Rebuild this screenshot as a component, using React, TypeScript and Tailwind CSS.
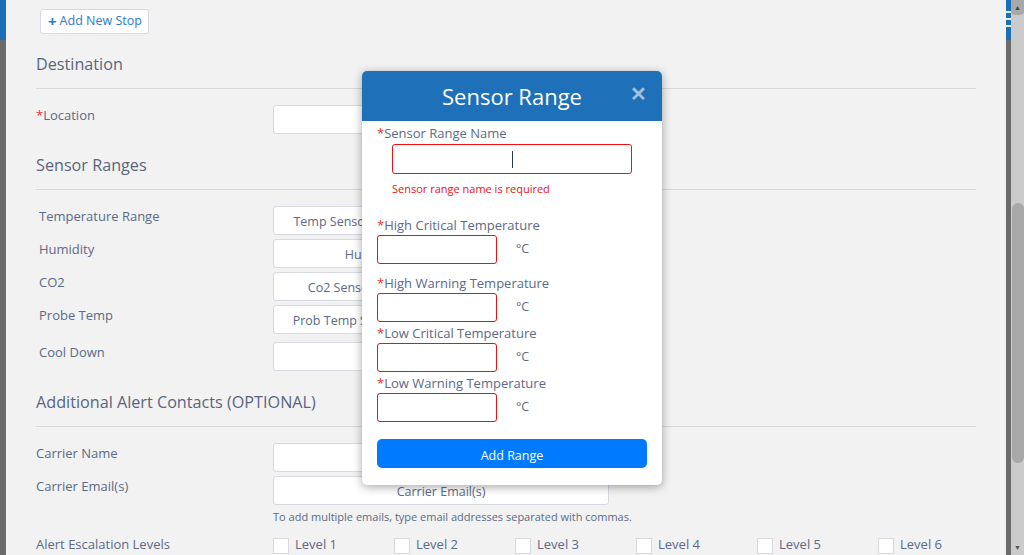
import React from 'react';

const font = { fontFamily: '"Open Sans", "Noto Sans", sans-serif' };

function Label({ text, required, indent }: { text: string; required?: boolean; indent?: boolean }) {
  return (
    <div className={`w-[237px] shrink-0 text-[13px] leading-[20px] text-[#5b6a87] ${indent ? 'pl-[3px]' : ''}`}>
      {required ? <span className="text-[#f0312b]">*</span> : null}
      {text}
    </div>
  );
}

function FieldRow({ label, value, required, indent, className }: { label: string; value?: string; required?: boolean; indent?: boolean; className?: string }) {
  return (
    <div className={`flex ${className ?? ''}`}>
      <Label text={label} required={required} indent={indent} />
      <div className="flex h-[29px] w-[336px] items-center justify-center overflow-hidden whitespace-nowrap rounded-[3px] border border-[#d6d9e0] bg-white pt-[3px] text-[12.5px] text-[#5b6a87]">
        {value}
      </div>
    </div>
  );
}

function Section({ title, className }: { title: string; className?: string }) {
  return (
    <div className={`border-b border-[#d9d9d9] pb-[12px] text-[16.2px] leading-[24px] text-[#5a6580] ${className ?? ''}`}>{title}</div>
  );
}

function TempField({ label, className }: { label: string; className?: string }) {
  return (
    <div className={className}>
      <div className="text-[13px] leading-[18px] text-[#5b6a87]">
        <span className="text-[#f0312b]">*</span>
        {label}
      </div>
      <div className="mt-[1px] flex items-center">
        <div className="h-[29px] w-[120px] rounded-[3px] border border-[#f01010] bg-white" />
        <span className="ml-[19px] text-[12.5px] text-[#5b6a87]">°C</span>
      </div>
    </div>
  );
}

function SensorModal() {
  return (
    <div className="absolute left-[356px] top-[71px] w-[300px] overflow-hidden rounded-[5px] bg-white shadow-[0_2px_10px_rgba(0,0,0,0.35)]">
      <div className="relative flex h-[50px] items-center justify-center bg-[#1e70b8]">
        <span className="text-[22px] text-white">Sensor Range</span>
        <span className="absolute right-[15px] top-[13px] text-[20px] font-bold leading-[20px] text-[#a6bfdc]">✕</span>
      </div>
      <div className="px-[15px] pb-[17px] pt-[3px]">
        <div className="text-[13px] leading-[18px] text-[#5b6a87]">
          <span className="text-[#f0312b]">*</span>Sensor Range Name
        </div>
        <div className="ml-[15px] mt-[2px] flex h-[30px] w-[240px] items-center justify-center rounded-[3px] border border-[#f01010] bg-white">
          <div className="h-[17px] w-px bg-[#2a3a5a]" />
        </div>
        <div className="ml-[15px] mt-[7px] text-[11px] leading-[15px] text-[#f01010]">Sensor range name is required</div>
        <TempField label="High Critical Temperature" className="mt-[20px]" />
        <TempField label="High Warning Temperature" className="mt-[10px]" />
        <TempField label="Low Critical Temperature" className="mt-[2px]" />
        <TempField label="Low Warning Temperature" className="mt-[2px]" />
        <button type="button" className="mt-[17px] h-[29px] w-[270px] rounded-[5px] bg-[#007bff] pt-[6px] text-[12.5px] text-white">
          Add Range
        </button>
      </div>
    </div>
  );
}

export default function App() {
  const levels = ['Level 1', 'Level 2', 'Level 3', 'Level 4', 'Level 5', 'Level 6'];
  return (
    <div className="flex h-[555px] w-[1024px] overflow-hidden bg-[#6b6b6b]" style={font}>
      <div className="flex w-[6px] shrink-0 flex-col">
        <div className="h-[40px] bg-[#1a6fb8]" />
      </div>

      <div className="relative w-[1000px] shrink-0 bg-[#f2f2f2] px-[30px] pt-[9px]">
        <button type="button" className="ml-[4px] flex h-[25px] items-center gap-[3px] rounded-[3px] border border-[#d6d9e0] bg-white pl-[7px] pr-[6px] text-[12.5px] text-[#2b7ad0]">
          <span className="text-[15px] font-bold leading-[15px]">+</span>
          Add New Stop
        </button>

        <Section title="Destination" className="mt-[18px]" />
        <FieldRow label="Location" required className="mt-[16px]" />

        <Section title="Sensor Ranges" className="mt-[19px]" />
        <div className="mt-[16px] flex flex-col gap-[4px]">
          <FieldRow label="Temperature Range" indent value="Temp Sensor Range: Frozen Goods (-25°C to -15°C)" />
          <FieldRow label="Humidity" indent value="Humidity Sensor Range 20%-60%" />
          <FieldRow label="CO2" indent value="Co2 Sensor Range: Standard (400 - 1000 ppm)" />
          <FieldRow label="Probe Temp" indent value="Prob Temp Sensor Range: Chilled Goods 2°C to 8°C" />
          <FieldRow label="Cool Down" indent className="mt-[4px]" />
        </div>

        <Section title="Additional Alert Contacts (OPTIONAL)" className="mt-[19px]" />
        <div className="mt-[16px] flex flex-col gap-[4px]">
          <FieldRow label="Carrier Name" />
          <FieldRow label="Carrier Email(s)" value="Carrier Email(s)" />
        </div>
        <div className="ml-[237px] mt-[4px] text-[11px] leading-[16px] text-[#5b6a87]">
          To add multiple emails, type email addresses separated with commas.
        </div>
        <div className="mt-[9px] flex">
          <Label text="Alert Escalation Levels" />
          <div className="flex">
            {levels.map((lv) => (
              <div key={lv} className="flex w-[121px] items-start gap-[6px]">
                <div className="mt-[4px] h-[16px] w-[16px] border border-[#d6d9e0] bg-white" />
                <span className="text-[13px] leading-[20px] text-[#5b6a87]">{lv}</span>
              </div>
            ))}
          </div>
        </div>

        <SensorModal />
      </div>

      <div className="flex w-[5px] shrink-0 flex-col">
        <div className="flex h-[40px] flex-col gap-[5px] bg-[#1a6fb8] pt-[11px]">
          <div className="h-[2px] bg-[#e8eef6]" />
          <div className="h-[2px] bg-[#e8eef6]" />
          <div className="h-[2px] bg-[#e8eef6]" />
        </div>
      </div>

      <div className="relative flex w-[13px] shrink-0 flex-col bg-[#cbcbcb]">
        <div className="flex h-[15px] items-center justify-center rounded-b-[4px] bg-[#a8a8a8] text-[7px] leading-none text-[#444]">▲</div>
        <div className="mx-auto mt-[188px] h-[260px] w-[12px] rounded-[6px] bg-[#a8a8a8]" />
        <div className="absolute bottom-[2px] left-0 flex h-[12px] w-[13px] items-center justify-center text-[7px] leading-none text-[#555]">▼</div>
      </div>
    </div>
  );
}
